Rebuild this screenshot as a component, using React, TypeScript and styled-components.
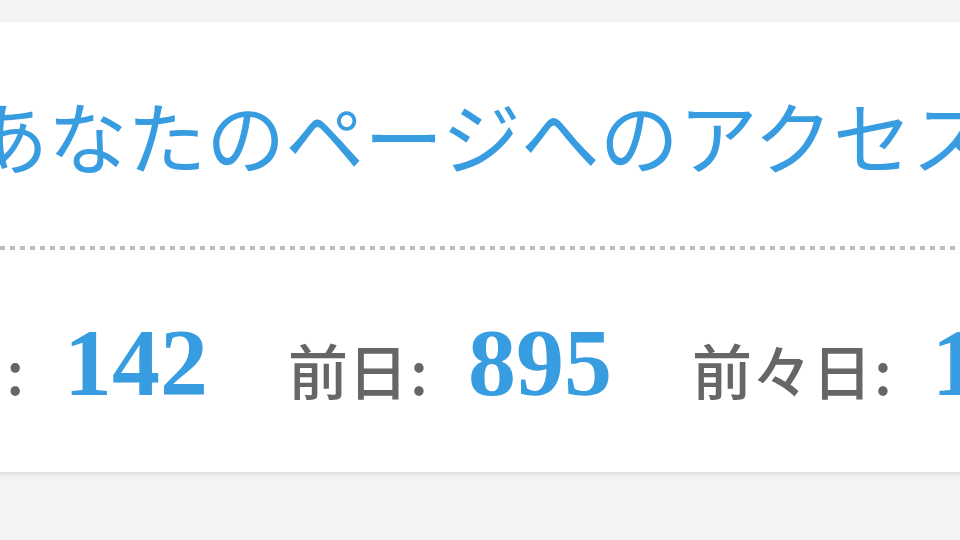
import React from "react";
import styled, { createGlobalStyle } from "styled-components";

const GlobalStyle = createGlobalStyle`
  html, body {
    margin: 0;
    padding: 0;
    background: #f3f3f3;
  }
  body {
    font-family: "Noto Sans CJK JP", "Noto Sans", sans-serif;
  }
`;

const Page = styled.div`
  width: 960px;
  height: 540px;
  overflow: hidden;
  display: flex;
  justify-content: center;
  align-items: flex-start;
  padding-top: 22px;
  box-sizing: border-box;
`;

const Card = styled.section`
  flex: 0 0 1260px;
  height: 450px;
  background: #ffffff;
  box-shadow: 0 2px 5px rgba(0, 0, 0, 0.09);
  display: flex;
  flex-direction: column;
  align-items: center;
`;

const Title = styled.h1`
  margin: 73px 0 0;
  font-family: "Noto Sans CJK JP", sans-serif;
  font-weight: 400;
  font-size: 79px;
  line-height: 79px;
  color: #389de0;
  white-space: nowrap;
`;

const Divider = styled.hr`
  align-self: stretch;
  margin: 72px 0 0;
  border: 0;
  height: 4px;
  background: repeating-linear-gradient(
    to right,
    #bdbdbd 0 5px,
    transparent 5px 10px
  );
`;

const Stats = styled.div`
  margin-top: 65px;
  display: flex;
  align-items: baseline;
  gap: 80px;
  white-space: nowrap;
`;

const Stat = styled.div`
  display: flex;
  align-items: baseline;
`;

const Label = styled.span`
  font-family: "Noto Sans CJK JP", sans-serif;
  font-size: 60px;
  font-weight: 500;
  color: #666666;
  line-height: 1;
`;

const Colon = styled.span`
  display: inline-block;
  margin-left: 2px;
`;

const Count = styled.span`
  margin-left: 40px;
  font-family: "Liberation Serif", "Times New Roman", serif;
  font-weight: 700;
  font-size: 96px;
  line-height: 1;
  color: #389de0;
`;

const stats = [
  { label: "今日", value: 142 },
  { label: "前日", value: 895 },
  { label: "前々日", value: 127 },
];

export default function App() {
  return (
    <>
      <GlobalStyle />
      <Page>
        <Card>
          <Title>あなたのページへのアクセス</Title>
          <Divider />
          <Stats>
            {stats.map((s) => (
              <Stat key={s.label}>
                <Label>
                  {s.label}
                  <Colon>:</Colon>
                </Label>
                <Count>{s.value}</Count>
              </Stat>
            ))}
          </Stats>
        </Card>
      </Page>
    </>
  );
}
